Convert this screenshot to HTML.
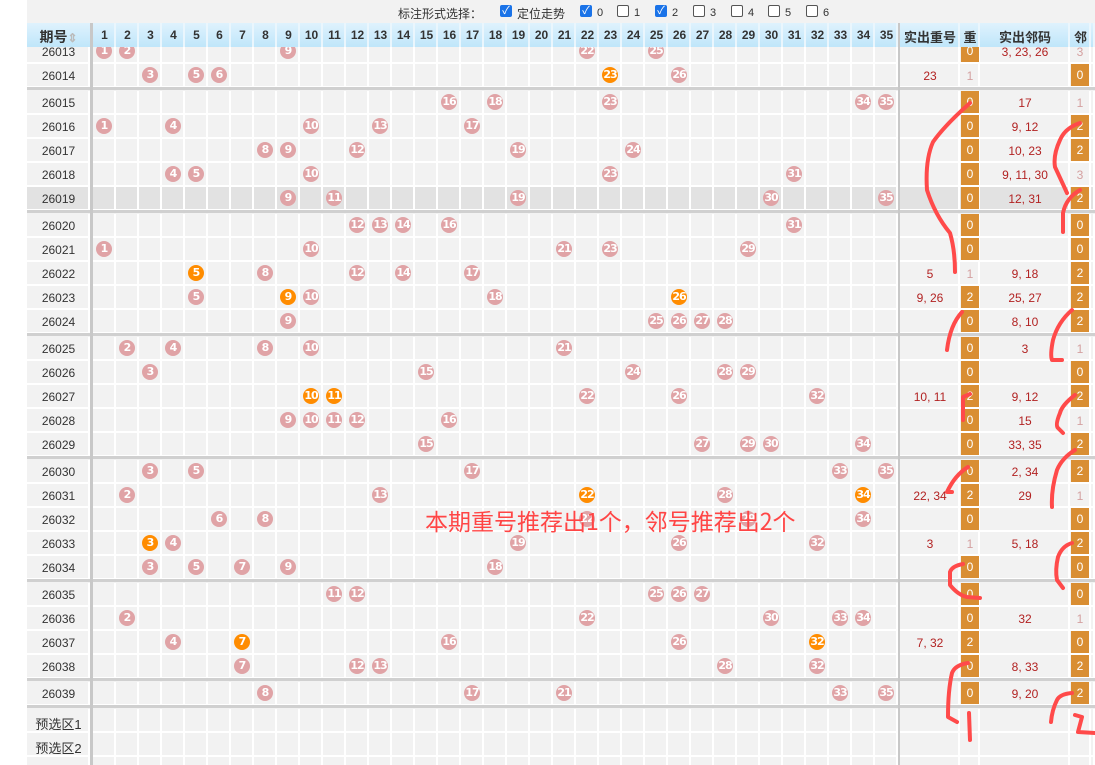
<!DOCTYPE html>
<html><head><meta charset="utf-8">
<style>
body{margin:0;width:1095px;height:765px;overflow:hidden;background:#fff;font-family:"Liberation Sans","Noto Sans CJK SC",sans-serif;position:relative}
#wrap{position:absolute;left:27px;top:0;width:1068px;height:765px;background:#f2f2f2;overflow:hidden}
.c{position:absolute;box-sizing:border-box}
.ball{position:absolute;width:16px;height:16px;border-radius:50%;background:#e0a3a6;color:#fff;font:bold 11px "DejaVu Sans",sans-serif;text-align:center;line-height:16px;letter-spacing:-1px}
.ball.o{background:#ff8c00}
.t{position:absolute;font-size:12px;text-align:center;color:#333}
.red{color:#b22222}
.ob{position:absolute;background:#d98e33;color:#fff;font-size:12px;text-align:center}
.pl{color:#d4a0a0}
</style></head><body>
<div id="wrap"></div>
<div style="position:absolute;left:398px;top:5px;font-size:12px;color:#333;white-space:nowrap" id="top"></div>
<svg style="position:absolute;left:0;top:0" width="1095" height="765" fill="none" stroke="#ff4a4a" stroke-width="4" stroke-linecap="round" stroke-linejoin="round">
<path d="M970 103 Q945 125 933 142 Q925 160 927 190 Q935 215 950 233 Q955 250 955 272"/>
<path d="M1080 123 Q1065 128 1060 140 Q1053 155 1055 167 Q1062 182 1067 193"/>
<path d="M1080 190 Q1066 198 1063 213 L1063 232"/>
<path d="M962 312 Q950 325 947 350"/>
<path d="M1072 310 Q1058 322 1053 340 Q1050 355 1052 360 L1062 360"/>
<path d="M970 394 L963 397 L963 420"/>
<path d="M1075 395 Q1062 405 1060 413 Q1055 425 1058 428 L1063 433"/>
<path d="M1075 450 Q1062 458 1057 470 Q1051 490 1052 507"/>
<path d="M968 467 Q955 475 947 492 L952 492"/>
<path d="M1072 543 Q1062 546 1058 557 Q1055 570 1057 580 L1063 588"/>
<path d="M963 564 Q952 566 950 572 L950 585 Q958 595 967 597 L980 598"/>
<path d="M968 663 Q955 665 952 673 Q948 690 948 717 L957 722"/>
<path d="M969 713 L970 740"/>
<path d="M1072 693 Q1060 694 1057 700 Q1052 710 1051 722"/>
<path d="M1075 715 L1082 717 L1078 732 L1095 733"/>
</svg>
<div style="position:absolute;left:425px;top:503px;font-size:23px;color:#ff4545;white-space:nowrap;font-family:'Noto Sans CJK SC',sans-serif">本期重号推荐出1个，邻号推荐出2个</div>
<script>
var W=document.getElementById('wrap'),h='';
function a(s){h+=s}
var tb='标注形式选择：';
var chk=[['定位走势',1,500],['0',1,580],['1',0,617],['2',1,655],['3',0,693],['4',0,731],['5',0,768],['6',0,806]];
var T='';
for(var i=0;i<chk.length;i++){var k=chk[i],x=k[2]-398;
T+='<span style="position:absolute;left:'+x+'px;top:0;width:12px;height:12px;border-radius:2px;box-sizing:border-box;'+(k[1]?'background:#1a73e8;':'border:1px solid #555;background:#fff;')+'color:#fff;font-size:11px;line-height:12px;text-align:center">'+(k[1]?'✓':'')+'</span><span style="position:absolute;left:'+(x+17)+'px;top:'+(k[0].length>1?0:2)+'px;font-size:'+(k[0].length>1?12:11)+'px">'+k[0]+'</span>';}
document.getElementById('top').innerHTML=tb+T;
var cols=[[0,63]];for(var c=0;c<35;c++)cols.push([66+c*23,23]);
cols.push([873,60],[933,20],[953,90],[1043,21],[1064,4]);
var R=[
['26013',[1,2,9,22,25],'',0,1,'3,23,26',3,0],
['26014',[3,5,6,-23,26],'23',1,0,'',0,1],
['26015',[16,18,23,34,35],'',0,1,'17',1,0],
['26016',[1,4,10,13,17],'',0,1,'9,12',2,1],
['26017',[8,9,12,19,24],'',0,1,'10,23',2,1],
['26018',[4,5,10,23,31],'',0,1,'9,11,30',3,0],
['26019',[9,11,19,30,35],'',0,1,'12,31',2,1],
['26020',[12,13,14,16,31],'',0,1,'',0,1],
['26021',[1,10,21,23,29],'',0,1,'',0,1],
['26022',[-5,8,12,14,17],'5',1,0,'9,18',2,1],
['26023',[5,-9,10,18,-26],'9,26',2,1,'25,27',2,1],
['26024',[9,25,26,27,28],'',0,1,'8,10',2,1],
['26025',[2,4,8,10,21],'',0,1,'3',1,0],
['26026',[3,15,24,28,29],'',0,1,'',0,1],
['26027',[-10,-11,22,26,32],'10,11',2,1,'9,12',2,1],
['26028',[9,10,11,12,16],'',0,1,'15',1,0],
['26029',[15,27,29,30,34],'',0,1,'33,35',2,1],
['26030',[3,5,17,33,35],'',0,1,'2,34',2,1],
['26031',[2,13,-22,28,-34],'22,34',2,1,'29',1,0],
['26032',[6,8,22,29,34],'',0,1,'',0,1],
['26033',[-3,4,19,26,32],'3',1,0,'5,18',2,1],
['26034',[3,5,7,9,18],'',0,1,'',0,1],
['26035',[11,12,25,26,27],'',0,1,'',0,1],
['26036',[2,22,30,33,34],'',0,1,'32',1,0],
['26037',[4,-7,16,26,-32],'7,32',2,1,'',0,1],
['26038',[7,12,13,28,32],'',0,1,'8,33',2,1],
['26039',[8,17,21,33,35],'',0,1,'9,20',2,1],
['预选区1'],['预选区2'],['预选区3']];
var tops=[[40,24]],y=64;
for(var i=1;i<R.length;i++){tops.push([y,24]);y+=24;if(i==1||i==6||i==11||i==16||i==21||i==25||i==26)y+=3;}
for(i=0;i<R.length;i++){var r=R[i],ty=tops[i][0],hh=tops[i][1],cy=ty+hh/2;
 if(i>0){a('<div class="c" style="left:0;top:'+ty+'px;width:1068px;height:'+hh+'px;'+(r[0]=='26019'?'background:#e2e2e2;':'')+'"></div>');}
 for(c=0;c<cols.length;c++)a('<div class="c" style="left:'+(cols[c][0]+cols[c][1]-2)+'px;top:'+ty+'px;width:2px;height:'+hh+'px;background:#fff"></div>');
 a('<div class="c" style="left:0;top:'+(ty+hh-2)+'px;width:1068px;height:2px;background:#fff"></div>');
 a('<div class="t" style="left:0;top:'+(cy-7)+'px;width:63px;color:#333;font-size:'+(i>26?13:12)+'px">'+r[0]+'</div>');
 if(!r[1])continue;
 for(var b=0;b<5;b++){var n=r[1][b],o=n<0;n=Math.abs(n);var x=cols[n][0]+3;
  a('<div class="ball'+(o?' o':'')+'" style="left:'+x+'px;top:'+(cy-9)+'px">'+n+'</div>');}
 a('<div class="t red" style="left:873px;top:'+(cy-7)+'px;width:60px">'+r[2].replace(/,/g,', ')+'</div>');
 if(r[4])a('<div class="ob" style="left:934px;top:'+ty+'px;width:18px;height:'+(hh-2)+'px;line-height:'+(hh-2)+'px">'+r[3]+'</div>');
 else a('<div class="t pl" style="left:933px;top:'+(cy-7)+'px;width:20px">'+r[3]+'</div>');
 a('<div class="t red" style="left:953px;top:'+(cy-7)+'px;width:90px">'+r[5].replace(/,/g,', ')+'</div>');
 if(r[7])a('<div class="ob" style="left:1044px;top:'+ty+'px;width:18px;height:'+(hh-2)+'px;line-height:'+(hh-2)+'px">'+r[6]+'</div>');
 else a('<div class="t pl" style="left:1043px;top:'+(cy-7)+'px;width:20px">'+r[6]+'</div>');
}
var seps=[87,210,333,456,579,678,705];
for(i=0;i<seps.length;i++)a('<div class="c" style="left:0;top:'+seps[i]+'px;width:1068px;height:3px;background:#d0d0d0"></div>');
// top bar background and header drawn on top
a('<div class="c" style="left:0;top:0;width:1068px;height:23px;background:#f2f2f2"></div>');
a('<div class="c" style="left:0;top:23px;width:1068px;height:24px;background:linear-gradient(#dff2fd,#bfe6fa)"></div>');
var hd=['期号'];for(c=1;c<=35;c++)hd.push(c);hd.push('实出重号','重','实出邻码','邻','');
for(c=0;c<cols.length;c++){
 if(c>0)a('<div class="c" style="left:'+(cols[c][0]+cols[c][1]-2)+'px;top:23px;width:2px;height:24px;background:#eaf6fd"></div>');
 a('<div class="t" style="left:'+cols[c][0]+'px;top:'+(c>0&&c<36?28:27)+'px;width:'+cols[c][1]+'px;font-weight:bold;font-size:'+(c>0&&c<36?12:c==0?14:13)+'px;color:#333;white-space:nowrap">'+hd[c]+(c==0?'<span style="color:#bbb;font-size:12px">⇕</span>':'')+'</div>');}
a('<div class="c" style="left:63px;top:23px;width:3px;height:742px;background:#c8c8c8"></div>');
a('<div class="c" style="left:871px;top:23px;width:2px;height:742px;background:#c8c8c8"></div>');
W.innerHTML=h;
</script>
</body></html>
